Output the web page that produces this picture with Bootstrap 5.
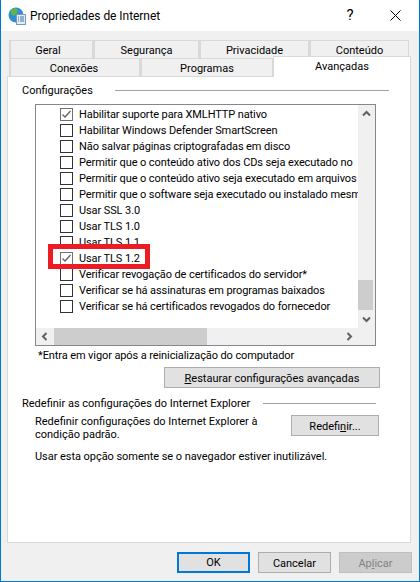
<!DOCTYPE html>
<html lang="pt"><head><meta charset="utf-8"><title>Propriedades de Internet</title>
<link href="https://cdn.jsdelivr.net/npm/bootstrap@5.3.0/dist/css/bootstrap.min.css" rel="stylesheet">
<style>
html,body{width:420px;height:582px;margin:0;overflow:hidden}
body{font:11px/16px Roboto,sans-serif;color:#000;background:#f0f0f0}
.win{width:420px;height:582px;border:1px solid #0078d7;border-top:0;background:#f0f0f0;display:flex;flex-direction:column}
.ttl{height:31px;flex:none;background:#fff;padding-left:7px;font-size:12px}
.ttl-text{margin-left:4px;margin-top:1px;letter-spacing:-.05px}
.ttl-q{width:22px;text-align:center;font-size:15px;margin-right:29px;margin-top:-1px}
.ttl-x{margin-right:18px;display:block}
.tabs{margin-top:9px;height:36px;padding-left:8px;flex:none}
.tab-row{height:18px;flex-wrap:nowrap}
.tabi{background:#f0f0f0;border:1px solid #d9d9d9;border-bottom:0;border-left-width:2px;text-align:center;height:18px;line-height:19px;flex:none}
.w1{width:84px;padding-right:7px}.w2{width:106px}.w3{width:110px}.w4{width:100px}
.w5{width:131px;padding-right:2px}.w6{width:133px}
.tabi.act{width:138px;background:#fff;height:21px;margin-top:-2px;position:relative;z-index:2;line-height:19px;border-width:1px 1px 0 1px;border-color:#d9d9d9}
.page{height:467px;width:404px;flex:none;margin-left:6px;background:#fff;border:1px solid #d9d9d9;padding-left:14px;position:relative;z-index:1}
.grp{height:20px;margin-top:3px;margin-right:21px}
.grp span{padding-top:2px}
.grp hr{flex:1;margin:0 0 0 22px;border:0;border-top:1px solid #a0a0a0;opacity:1}
.lst{height:242px;width:341px;margin-left:13px;margin-top:4px;border:1px solid #828790;display:grid;grid-template-columns:322px 17px;grid-template-rows:223px 17px;background:#fff}
.items{overflow:hidden;padding:1px 0 0 24px;letter-spacing:-.1px}
.itm{height:16px;white-space:nowrap;gap:6px}
.itm-label{padding-top:2px}
.cb{width:13px;height:13px;flex:none;border:1px solid #333;background:#fff;display:block}
.cb.on{border-color:#707070}
.cb svg{display:block}
.sbar{background:#f0f0f0}
.arr{width:17px;height:17px;flex:none;display:block}
.vthumb{width:15px;height:30px;background:#cdcdcd;margin-bottom:1px}
.hthumb{width:153px;height:17px;background:#cdcdcd;margin-left:1px}
.note{height:18px;line-height:20px;margin-left:16px;letter-spacing:-.1px}
.wbtn{border-radius:0;padding:1px 0 0;height:21px;background:#e1e1e1;border:1px solid #adadad;color:#000;font-size:11px;line-height:17px}
.wbtn:hover{background:#e1e1e1;border-color:#adadad;color:#000}
.wide{width:216px;margin:3px 30px 0 auto;display:block}
.grp2{height:16px;margin-top:7px;margin-right:34px}
.grp2 span{padding-top:2px}
.grp2 hr{flex:1;margin:0 0 0 13px;border:0;border-top:1px solid #a0a0a0;opacity:1}
.rst{margin-top:4px;margin-left:13px;margin-right:31px}
.rst-text{line-height:13px;width:250px}
.mini{width:88px}
.last{margin:8px 0 0 13px;letter-spacing:-.05px}
.foot{margin-top:9px;height:21px;padding-right:7px;gap:8px;flex:none}
.fbtn{width:73px}
.fbtn.def{border:2px solid #0078d7;padding-top:0}
.fbtn.off,.fbtn.off:disabled{background:#ccc;border-color:#bfbfbf;color:#838383;opacity:1}
.mark-red{position:absolute;left:40px;top:167px;width:102px;height:25px;border:5px solid #ed1c24}
</style></head><body>
<div class="win">
<div class="ttl d-flex align-items-center">
<svg width="18" height="18" viewBox="0 0 18 18"><circle cx="8" cy="8" r="7.500" fill="#2f8fd3"/><path d="M3 3l4-2 3 2-1 3-3 3-3-2zM10 10l3-1 1 2-3 4z" fill="#5fb548"/><rect x="8.500" y="7.500" width="9" height="10" fill="#e4edf6" stroke="#7d97b5"/><path d="M10 10h1M12 10h4M10 12h1M12 12h4M10 14h1M12 14h4" stroke="#3f73ad"/></svg>
<span class="ttl-text flex-grow-1">Propriedades de Internet</span>
<span class="ttl-q">?</span>
<svg class="ttl-x" width="11" height="11" viewBox="0 0 11 11"><path d="M.5.500l10 10M10.500.500l-10 10" stroke="#000" fill="none"/></svg>
</div>

<div class="tabs">
<div class="nav tab-row">
<div class="tabi w1">Geral</div><div class="tabi w2">Segurança</div><div class="tabi w3">Privacidade</div><div class="tabi w4">Conteúdo</div>
</div>
<div class="nav tab-row">
<div class="tabi w5">Conexões</div><div class="tabi w6">Programas</div><div class="tabi act">Avançadas</div>
</div>
</div>

<div class="page">
<div class="grp d-flex align-items-center"><span>Configurações</span><hr></div>
<div class="lst">
<div class="items">
<div class="itm d-flex align-items-center"><span class="cb on"><svg width="11" height="11" viewBox="0 0 11 11"><path d="M1.500 5.500l2.500 2.500 5.500-6" stroke="#606060" stroke-width="1.300" fill="none"/></svg></span><span class="itm-label">Habilitar suporte para XMLHTTP nativo</span></div>
<div class="itm d-flex align-items-center"><span class="cb"></span><span class="itm-label">Habilitar Windows Defender SmartScreen</span></div>
<div class="itm d-flex align-items-center"><span class="cb"></span><span class="itm-label">Não salvar páginas criptografadas em disco</span></div>
<div class="itm d-flex align-items-center"><span class="cb"></span><span class="itm-label">Permitir que o conteúdo ativo dos CDs seja executado no</span></div>
<div class="itm d-flex align-items-center"><span class="cb"></span><span class="itm-label">Permitir que o conteúdo ativo seja executado em arquivos</span></div>
<div class="itm d-flex align-items-center"><span class="cb"></span><span class="itm-label">Permitir que o software seja executado ou instalado mesm</span></div>
<div class="itm d-flex align-items-center"><span class="cb"></span><span class="itm-label">Usar SSL 3.0</span></div>
<div class="itm d-flex align-items-center"><span class="cb"></span><span class="itm-label">Usar TLS 1.0</span></div>
<div class="itm d-flex align-items-center"><span class="cb"></span><span class="itm-label">Usar TLS 1.1</span></div>
<div class="itm d-flex align-items-center"><span class="cb on"><svg width="11" height="11" viewBox="0 0 11 11"><path d="M1.500 5.500l2.500 2.500 5.500-6" stroke="#606060" stroke-width="1.300" fill="none"/></svg></span><span class="itm-label">Usar TLS 1.2</span></div>
<div class="itm d-flex align-items-center"><span class="cb"></span><span class="itm-label">Verificar revogação de certificados do servidor*</span></div>
<div class="itm d-flex align-items-center"><span class="cb"></span><span class="itm-label">Verificar se há assinaturas em programas baixados</span></div>
<div class="itm d-flex align-items-center"><span class="cb"></span><span class="itm-label">Verificar se há certificados revogados do fornecedor</span></div>
</div>
<div class="sbar d-flex flex-column">
<svg class="arr" viewBox="0 0 17 17"><path d="M5 10.500l3.500-3.500 3.500 3.500" stroke="#606060" stroke-width="2" fill="none"/></svg>
<div class="flex-grow-1"></div>
<div class="vthumb"></div>
<svg class="arr" viewBox="0 0 17 17"><path d="M5 6.500l3.500 3.500 3.500-3.500" stroke="#606060" stroke-width="2" fill="none"/></svg>
</div>
<div class="sbar d-flex">
<svg class="arr" viewBox="0 0 17 17"><path d="M10.500 5l-3.500 3.500 3.500 3.500" stroke="#606060" stroke-width="2" fill="none"/></svg>
<div class="hthumb"></div>
<div class="flex-grow-1"></div>
<svg class="arr" viewBox="0 0 17 17"><path d="M6.500 5l3.500 3.500-3.500 3.500" stroke="#606060" stroke-width="2" fill="none"/></svg>
</div>
<div class="sbar"></div>
</div>
<div class="note">*Entra em vigor após a reinicialização do computador</div>
<button type="button" class="btn wbtn wide"><u>R</u>estaurar configurações avançadas</button>
<div class="grp2 d-flex align-items-center"><span>Redefinir as configurações do Internet Explorer</span><hr></div>
<div class="rst d-flex justify-content-between">
<div class="rst-text">Redefinir configurações do Internet Explorer à condição padrão.</div>
<button type="button" class="btn wbtn mini">Redefi<u>n</u>ir...</button>
</div>
<div class="last">Usar esta opção somente se o navegador estiver inutilizável.</div>
<div class="mark-red"></div>
</div>

<div class="foot d-flex justify-content-end">
<button type="button" class="btn wbtn fbtn def">OK</button>
<button type="button" class="btn wbtn fbtn">Cancelar</button>
<button type="button" class="btn wbtn fbtn off" disabled>Ap<u>l</u>icar</button>
</div>
</div>
</body></html>
